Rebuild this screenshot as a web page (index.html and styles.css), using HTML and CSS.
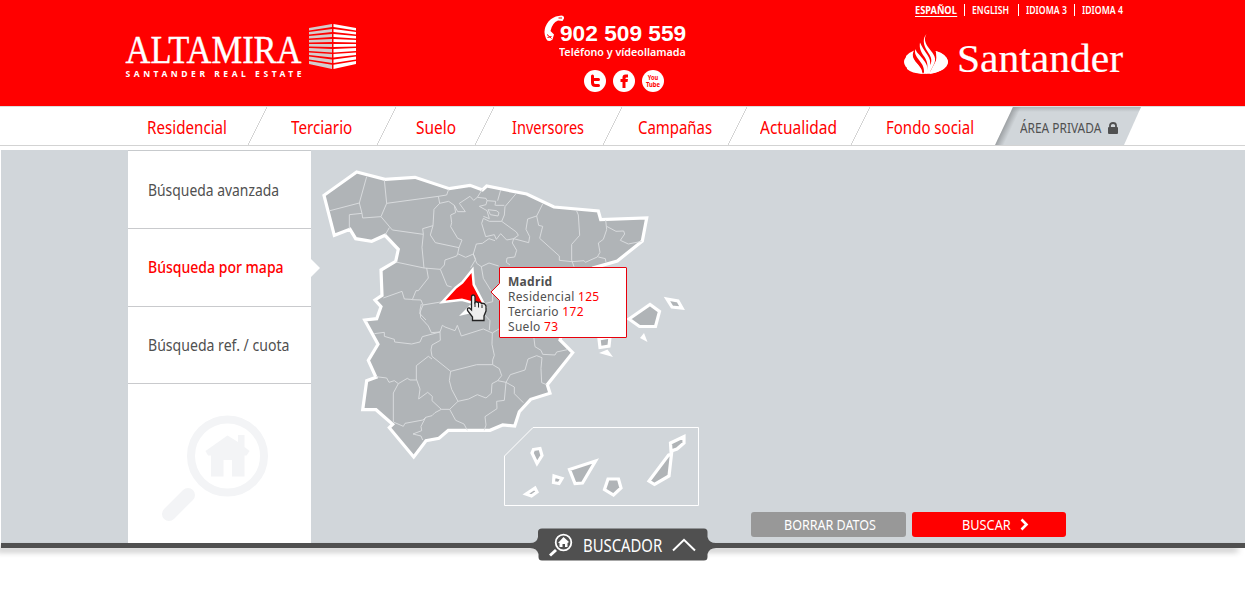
FILE: index.html
```html
<!DOCTYPE html>
<html lang="es">
<head>
<meta charset="utf-8">
<title>Altamira Santander Real Estate</title>
<link rel="stylesheet" href="styles.css">
</head>
<body>
<header class="header">
  <a class="logo-altamira">
    <svg width="232" height="60" viewBox="125 20 232 60">
      <text class="wordmark" x="125.500" y="63" textLength="176" lengthAdjust="spacingAndGlyphs">ALTAMIRA</text>
      <text class="tagline" x="125.500" y="77" textLength="176">SANTANDER REAL ESTATE</text>
      <path fill="#d4cccc" d="M309 28L332 24V27L309 30.600ZM309 32L332 29V32L309 34.600ZM309 36L332 34V37L309 38.600ZM309 40L332 39V42L309 42.600ZM309 44L332 44V47L309 46.600ZM309 48L332 49V52.500L309 51ZM309 52.500L332 54V57.500L309 55ZM309 56.500L332 59.500V63L309 59.500ZM309 61L332 64.800V69L309 64Z"/>
      <path fill="#fff" d="M356 28L333.500 24V27L356 30.600ZM356 32L333.500 29V32L356 34.600ZM356 36L333.500 34V37L356 38.600ZM356 40L333.500 39V42L356 42.600ZM356 44L333.500 44V47L356 46.600ZM356 48L333.500 49V52.500L356 51ZM356 52.500L333.500 54V57.500L356 55ZM356 56.500L333.500 59.500V63L356 59.500ZM356 61L333.500 64.800V69L356 64Z"/>
    </svg>
  </a>
  <div class="contact">
    <div class="phone">
      <svg width="20" height="28" viewBox="544 15 20 28"><path d="M558.500 16L561.500 15.500Q564.500 16 564 18.500L562.500 21L558 20.500Q552 23 550.500 31L554 34.500L552.500 39.500Q548 43 546 38.500Q542 30 548.500 21.500Q553 16.500 558.500 16Z" fill="#fff"/><path d="M558.500 18H562M547.500 37.500L551.500 36.500M547 34.500L551.500 38.500" stroke="#f00" stroke-width="1"/></svg>
      <strong class="number">902 509 559</strong>
    </div>
    <div class="phone-note"><span class="fit fit-note">Teléfono y vídeollamada</span></div>
    <div class="social">
      <svg width="22" height="22" viewBox="0 0 22 22"><circle cx="11" cy="11" r="11" fill="#fff"/><path d="M8.500 6V12.500Q8.500 15.500 11.500 15.500H14.500M8.500 9.500H14.500" fill="none" stroke="#f00" stroke-width="3" stroke-linecap="round"/></svg>
      <svg width="22" height="22" viewBox="0 0 22 22"><circle cx="11" cy="11" r="11" fill="#fff"/><path d="M9.500 18V12H7.500V9H9.500V7.500Q9.500 4.500 12.500 4.500H15V7.500H13.500Q12.500 7.500 12.500 8.500V9H15L14.500 12H12.500V18Z" fill="#f00"/></svg>
      <svg width="22" height="22" viewBox="0 0 22 22"><circle cx="11" cy="11" r="11" fill="#fff"/><text class="yt" x="5.800" y="9.800" textLength="10.500" lengthAdjust="spacingAndGlyphs">You</text><text class="yt" x="4" y="17.300" textLength="14" lengthAdjust="spacingAndGlyphs">Tube</text></svg>
    </div>
  </div>
  <div class="corner">
    <nav class="languages">
      <a class="lang active"><span class="fit fit-es">ESPAÑOL</span></a>
      <a class="lang"><span class="fit fit-en">ENGLISH</span></a>
      <a class="lang"><span class="fit fit-l3">IDIOMA 3</span></a>
      <a class="lang"><span class="fit fit-l4">IDIOMA 4</span></a>
    </nav>
    <svg class="logo-santander" width="222" height="46" viewBox="903 32 222 46">
      <ellipse cx="926" cy="62" rx="22" ry="11.800" fill="#fff"/>
      <path d="M914 46C910 55 913 60 918 65Q922 69 922.500 73L932 71C935 64 938 60 936 52L931 46Z" fill="#f00"/>
      <path d="M914 50.500C911 56 914 60 918 64.500C921 68 922 70 922 73.700Q912 73.500 907 69L906 56Q909 52.500 914 50.500ZM936 51Q947 54 948 62Q946 71 930 73.700C931 68 936 63 936.500 58Z" fill="#fff"/>
      <path d="M926.500 34C924 38 924.500 42 928 47C932 53 937 56 934.500 63L930 72L926 73.700C929 66 927 61 924.500 57C921 52 919 48 920 42.500C921.500 46 924 50 927.500 55C930 59 930.500 61 930 65C933 60 930.500 56 927.500 51.500C923 45 922.500 38 926.500 34Z" fill="#fff"/>
      <path d="M915.500 49C914 53 916 56 919 60C922 64 924.500 67 924 73.500L927 73C929 67 926 63 922.500 58.500C919 54 916 52 915.500 49Z" fill="#fff"/>
      <text class="bank" x="957" y="71.500" textLength="166" lengthAdjust="spacingAndGlyphs">Santander</text>
    </svg>
  </div>
</header>

<nav class="menu">
  <a class="item"><span class="fit fit-residencial">Residencial</span></a>
  <a class="item"><span class="fit fit-terciario">Terciario</span></a>
  <a class="item"><span class="fit fit-suelo">Suelo</span></a>
  <a class="item"><span class="fit fit-inversores">Inversores</span></a>
  <a class="item"><span class="fit fit-campanas">Campañas</span></a>
  <a class="item"><span class="fit fit-actualidad">Actualidad</span></a>
  <a class="item"><span class="fit fit-fondo">Fondo social</span></a>
  <a class="private"><span class="private-label"><span class="fit fit-area">ÁREA PRIVADA</span></span>
    <svg width="10" height="12" viewBox="0 0 10 12"><path d="M2 6V3.500Q2 1 5 1T8 3.500V6" fill="none" stroke="#505050" stroke-width="1.800"/><rect y="5" width="10" height="7" rx="1" fill="#505050"/></svg>
  </a>
</nav>

<main class="panel">
  <aside class="sidebar">
    <a class="search"><span class="fit fit-avanzada">Búsqueda avanzada</span></a>
    <a class="search selected"><span class="fit fit-mapa">Búsqueda por mapa</span></a>
    <a class="search"><span class="fit fit-ref">Búsqueda ref. / cuota</span></a>
    <div class="watermark">
      <svg width="108" height="108" viewBox="161 414 108 108" fill="#f3f4f6"><circle cx="227.500" cy="456" r="36.500" fill="none" stroke="#f3f4f6" stroke-width="8"/><path d="M169 514L188 495" stroke="#f3f4f6" stroke-width="14" stroke-linecap="round"/><path d="M227.500 435.500L238 442V435H244.500V447L249.500 451L246.500 455.500H244.500V476.500H232V460H223.500V476.500H211V455.500H208L205.500 451Z"/></svg>
    </div>
  </aside>
  <div class="map">
    <svg width="400" height="393" viewBox="311 150 400 393">
      <path class="land" d="M356.700 172L385 179.300L415 177.300L449.300 188.700L470 185.300L482.500 190L486.700 186L526.700 194L554 207L598.300 211L600.700 219.700L646.700 218L642.300 241L617.300 261L593 268L575 290L560 340L572.700 352.700L547.300 384.700L550 393.300L530.700 399.300L519.300 411.700L514.700 426L502.700 425L490 430.300H448.300L439 438.300L426 440.700L413.700 457L389.300 427.700L392.700 424.300L376 409.700H362.700L366.700 380.700L376 377.300L368.300 360.300L378 344.300L364.700 320L376.700 318.700L381 306.700L375 300L382 295.300L381 270L395.700 261.300L398.300 249.300L385 235.300L371.700 241.300L355.700 238.700L350 229.300L334.300 235.300L324 195.300Z"/>
      <!-- Provinces: north-west -->
      <g class="borders" transform="translate(310 160) scale(.33333)">
        <path d="M170 50L148 129L60 152M148 129L156 160L158 174L213 170L230 130L223 60M156 160L118 164V206M213 170L247 210L340 223M230 130L385 109L410 105L416 88M238 203L226 224M385 109L389 130L372 148L369 197L338 206L340 223L336 262L342 324L257 306M389 130L416 124L433 136L443 155H466L448 130L480 109L491 121L502 112L517 88M433 136L437 158L422 165L425 188L422 200L443 235L456 240L447 263L376 248L361 225L369 197M447 263L443 281L467 292L490 282L499 252L517 250L537 236M502 112L528 115L531 122L557 124L555 136M508 139L531 152L538 176L520 169M508 139L528 134L531 122M534 149L559 152L567 158L564 168L541 164ZM490 282L500 310L514 320L537 309L566 318M443 281L440 288L405 300L403 315L391 328L342 324M350 324L355 354L325 392H318L307 419L303 418L283 417L276 394L220 414M391 328L411 377L425 381M307 419L333 420L339 435L404 424M339 435L329 460L348 480M490 282L497 298L482 323M514 320L520 355L548 400V425L520 432"/>
      </g>
      <!-- Provinces: north-east -->
      <g class="borders" transform="translate(480 160) scale(.33333)">
        <path d="M62 90L53 122M109 100L75 140L73 165L65 184L109 216L115 226L101 236L146 248L149 230L138 208L143 177L170 168L188 132M170 168L176 196L188 199L179 235L238 288V301L276 305L312 302L316 307L352 291L360 277L355 249L370 238L380 209L377 180M290 153L295 165L299 226L275 253V300L282 320M380 199L408 214L431 213L434 222L421 241L445 252L485 244M355 291L376 296L378 307M101 236L97 249L110 271L104 291L81 294L79 307L90 315M46 136H73M10 175L5 190L17 230L43 224L49 238L62 221L80 240L101 236M10 175L28 184H65M27 236L45 242"/>
      </g>
      <!-- Provinces: centre and south -->
      <g class="borders" transform="translate(340 300) scale(.33333)">
        <path d="M103 101L133 97V109L163 118L164 126L215 132L240 126L247 110L300 96L307 76L315 81L345 92L352 76L364 108L430 87L448 95L457 99L456 133L463 166L458 180V194H410L332 214M244 12L240 30L242 53L265 78L274 98L300 96L301 121L276 135L273 150L276 169L332 214L328 242L335 268L354 304L329 328L304 328L276 302L277 289L263 277L236 297L240 267L229 237V197L265 169L276 177M108 230L140 234L147 247L163 242L175 251L202 235L210 240H229M175 251L160 279V366L190 379L195 370L249 360L257 352L276 347L285 338L304 328M257 352L243 379L245 392L219 402L243 408L248 420M329 328L347 361L372 372L382 391M354 304L386 297L412 284L438 294L454 280L456 251L473 242L485 227L478 206L458 194M473 242L498 247L511 224L555 210L564 177L590 167L606 173L603 205L605 248L620 254M498 247L493 301L470 304L471 326L435 350L438 375L433 391M498 247L523 261V281L550 308M457 99L480 85L500 110M580 100L585 140L603 151L608 163L645 165L650 156L682 149M430 40L450 62L448 90"/>
      </g>
      <!-- Balearic Islands -->
      <path class="isle" d="M629 319L650 304.500L659.500 311.500L655.500 326.500L639.500 326.500ZM667 299L678 301L682 308L672 307ZM599 339L610 337L609 346L600 347.500Z"/>
      <path fill="#fff" d="M644 333L647.500 342L640 338ZM599 353L607.500 349.500L613 357Z"/>
      <!-- Canary Islands -->
      <path class="frame" d="M504.500 456L533 427.500H698.500V505.500H504.500Z"/>
      <path class="isle" d="M533.500 449.500L540 448.500L542 455.500L537 463.500L532 453ZM554 476L562 478.500L559 483.500L553.500 482.500ZM526 494L535 488L537 492L531.500 496ZM569.500 469.500L595.500 461L582.500 483L575 483.500ZM608 479H618.500L621 488L613.500 495L604.500 489.500ZM668.500 455L671.500 454L669 476L654.500 484.500L649 481ZM670.500 443L684 436.500V443L677 449L671 451Z"/>
      <!-- Madrid -->
      <path d="M459 316L470 305L485 310Z" fill="#fff"/>
      <path class="madrid" d="M471.500 273L472.500 285L482.500 304L462 298.500L445.500 300.500L456.500 288.500L463 283.500Z"/>
      <path class="hand" d="M471.500 297Q471.500 295 473.200 295T475 297V302.500Q476 301 478 302.500Q480 301.500 481.500 303.500Q484.500 302.500 486 306V311L484 316V320.500H472.500V317L467.500 310.500Q467 307.500 469.500 308L471.500 310Z"/>
      <path d="M475 302V307M478.500 303V307.500M482 304.500V308" stroke="#222" fill="none"/>
    </svg>
    <div class="tooltip">
      <svg class="tooltip-tip" width="11" height="20" viewBox="0 0 11 20"><path d="M10 1L1 10L10 19" fill="#fff" stroke="#e8000b"/><path d="M10.500 1V19" stroke="#fff" stroke-width="1.500"/></svg>
      <strong>Madrid</strong>
      <span>Residencial <b>125</b></span>
      <span>Terciario <b>172</b></span>
      <span>Suelo <b>73</b></span>
    </div>
  </div>
  <div class="actions">
    <button class="button clear"><span class="fit fit-borrar">BORRAR DATOS</span></button>
    <button class="button submit"><span class="fit fit-buscar">BUSCAR</span><svg class="chevron" width="9" height="13" viewBox="0 0 9 13"><path d="M1.500 1.500L6.500 6.500L1.500 11.500" fill="none" stroke="#fff" stroke-width="2.600"/></svg></button>
  </div>
</main>

<footer class="drawer">
  <div class="tab">
    <svg class="tab-shape" width="186" height="34" viewBox="530 528 186 34"><path d="M530 543Q537 543 538 537V532Q538 528.500 542 528.500H704Q707.500 528.500 707.500 532V537Q709 543 716 543V548Q709 548 707.500 554V557Q707.500 560.500 704 560.500H542Q538.500 560.500 538.500 557V554Q537 548 530 548Z" fill="#505050"/></svg>
    <svg class="tab-icon" width="24" height="24" viewBox="549 534 24 24"><circle cx="563.500" cy="543.500" r="7.800" fill="none" stroke="#fff" stroke-width="1.800"/><path d="M550 556.500L556 551" stroke="#fff" stroke-width="3"/><path d="M563.500 538L569 543L567.500 544V548H565V545H562.500V548H559.500V544H558Z" fill="#fff"/></svg>
    <span class="tab-label"><span class="fit fit-buscador">BUSCADOR</span></span>
    <svg class="tab-arrow" width="24" height="14" viewBox="0 0 24 14"><path d="M1 12.500L12 1.800L23 12.500" fill="none" stroke="#fff" stroke-width="2"/></svg>
  </div>
</footer>
</body>
</html>
```

FILE: styles.css
```css
* { box-sizing: border-box; }

body {
  margin: 0;
  height: 615px;
  overflow: hidden;
  background: #fff;
  font-family: "Noto Sans", sans-serif;
  color: #505050;
}

svg { display: block; flex: none; }

/* Condensed lettering */
.fit {
  display: inline-block;
  white-space: nowrap;
  transform-origin: 0 50%;
}
.fit-note { transform: scaleX(.975); }
.fit-es { transform: scaleX(.88); }
.fit-en { transform: scaleX(.82); }
.fit-l3, .fit-l4 { transform: scaleX(.83); }
.fit-residencial { transform: scaleX(.842); }
.fit-terciario { transform: scaleX(.848); }
.fit-suelo { transform: scaleX(.857); }
.fit-inversores { transform: scaleX(.807); }
.fit-campanas { transform: scaleX(.83); }
.fit-actualidad { transform: scaleX(.861); }
.fit-fondo { transform: scaleX(.834); }
.fit-area { transform: scaleX(.85); }
.fit-avanzada { transform: scaleX(.868); }
.fit-mapa { transform: scaleX(.877); }
.fit-ref { transform: scaleX(.88); }
.fit-borrar { transform: scaleX(.835); }
.fit-buscar { transform: scaleX(.85); }
.fit-buscador { transform: scaleX(.825); }

/* Header */
.header {
  display: grid;
  grid-template-columns: 419px 359px 1fr;
  height: 106px;
  padding-left: 125px;
  background: #f00;
  color: #fff;
}
.logo-altamira { padding-top: 20px; }
.wordmark { font: 40.500px "Liberation Serif", serif; fill: #fff; stroke: #fff; stroke-width: .4px; }
.tagline { font: bold 8.500px "Noto Sans", sans-serif; fill: #fff; }
.contact { padding-top: 15px; }
.phone { display: flex; height: 29px; }
.number {
  margin-left: -4px;
  padding-top: 8px;
  font: bold 22.700px/21px "Liberation Sans", sans-serif;
  white-space: nowrap;
}
.phone-note { height: 15px; padding-left: 15px; font-size: 11px; font-weight: 600; line-height: 15px; }
.social { display: flex; gap: 7px; padding: 11px 0 0 40px; }
.yt { font: bold 7px "Noto Sans", sans-serif; fill: #f00; }
.languages {
  display: grid;
  grid-template-columns: 50px 54px 56px 50px;
  height: 32px;
  padding: 4px 0 0 11px;
  font-size: 10.500px;
  font-weight: 600;
  line-height: 12px;
}
.lang { height: 12px; border-left: 1px solid #fff; padding-left: 7px; }
.lang:first-child { border-left: 0; padding-left: 1px; }
.active { font-weight: 700; }
.active .fit { border-bottom: 1px solid #fff; line-height: 11px; }
.bank { font: 40px "Liberation Serif", serif; fill: #fff; stroke: #fff; stroke-width: .2px; }

/* Main menu */
.menu {
  display: grid;
  grid-template-columns: 129px 129px 98px 128px 125px 123px 125px 146px;
  grid-template-rows: 38px;
  height: 40px;
  margin-bottom: 4px;
  padding-left: 138px;
  border-top: 1px solid #ddd;
  border-bottom: 1px solid #d3d3d3;
  color: #f00;
  font-size: 18px;
  line-height: 40px;
}
.item {
  height: 38px;
  padding-left: 9px;
  background: linear-gradient(116.200deg, transparent 48.500%, #d4d4d4 48.600%, #d4d4d4 51.400%, transparent 51.500%) right / 19px 38px no-repeat;
}
.item:nth-child(2) { padding-left: 24px; }
.item:nth-child(3) { padding-left: 20px; }
.item:nth-child(4) { padding-left: 18px; }
.item:nth-child(5) { padding-left: 16px; }
.item:nth-child(6) { padding-left: 13px; }
.item:nth-child(7) { padding-left: 16px; background: none; }
.private {
  display: flex;
  align-items: center;
  gap: 6px;
  height: 38px;
  padding: 4px 0 0 25px;
  clip-path: polygon(18px 0, 100% 0, calc(100% - 17px) 100%, 0 100%);
  background: linear-gradient(#9ba0a399, transparent 5px), linear-gradient(115deg, transparent 15px, #9b9fa2 16px, #d1d6da 24px);
  color: #505050;
  font-size: 14px;
  line-height: 20px;
}
.private-label { width: 82px; }

/* Search panel */
.panel {
  display: grid;
  grid-template-columns: 183px 440px 1fr;
  height: 393px;
  margin-left: 1px;
  padding-left: 127px;
  background: #d1d6da;
}
.sidebar { border-top: 1px solid #c7cacd; background: #fff; }
.search {
  position: relative;
  display: block;
  height: 78px;
  padding-left: 20px;
  border-bottom: 1px solid #c9cacd;
  font-size: 16px;
  line-height: 78px;
}
.search:nth-child(3) { height: 77px; line-height: 76px; }
.selected { color: #f00; font-weight: 500; line-height: 76px; }
.selected::after {
  content: "";
  position: absolute;
  left: 183px;
  top: 30px;
  border: solid transparent;
  border-width: 9px 0 9px 9px;
  border-left-color: #fff;
}
.watermark { padding: 30px 0 0 33px; }
.map { position: relative; }

/* Map drawing */
.land { fill: #b0b4b7; stroke: #fff; stroke-width: 3.200px; }
.borders { fill: none; stroke: #dcdfe1; stroke-width: 2.700px; }
.isle { fill: #b0b4b7; stroke: #fff; stroke-width: 3.200px; }
.frame { fill: none; stroke: #fff; stroke-width: 1px; }
.madrid { fill: #f00; stroke: #fff; stroke-width: 5px; paint-order: stroke; }
.hand { fill: #eee; stroke: #222; stroke-width: 1.300px; }

.tooltip {
  position: absolute;
  left: 188px;
  top: 117px;
  display: flex;
  flex-direction: column;
  width: 128px;
  height: 71px;
  padding: 6px 0 0 8px;
  border: 1px solid #e8000b;
  border-radius: 1px;
  background: #fff;
  font-size: 12px;
  line-height: 15px;
  letter-spacing: .3px;
}
.tooltip b { color: #f00; font-weight: 400; }
.tooltip-tip { position: absolute; left: -10px; top: 14px; }

/* Buttons */
.actions { display: flex; align-self: end; gap: 6px; padding-bottom: 6px; }
.button {
  display: flex;
  align-items: center;
  height: 25px;
  padding: 0;
  border: 0;
  border-radius: 3px;
  color: #fff;
  font: 15px/25px "Noto Sans", sans-serif;
}
.clear { width: 155px; padding-left: 33px; background: #989898; }
.submit { width: 154px; padding-left: 50px; background: #f00; }
.chevron { margin-left: 1px; }

/* Bottom drawer */
.drawer {
  height: 5px;
  margin-left: 1px;
  background: #505050;
  box-shadow: -6px 4px 6px -1px #0006;
}
.tab {
  position: relative;
  top: -15px;
  display: flex;
  align-items: center;
  width: 186px;
  height: 34px;
  margin-left: 529px;
  padding-left: 19px;
  color: #fff;
  font-size: 18px;
}
.tab-shape { position: absolute; left: 0; top: 0; }
.tab-icon, .tab-label, .tab-arrow { position: relative; }
.tab-label { width: 79px; margin: 0 10px; }
```
